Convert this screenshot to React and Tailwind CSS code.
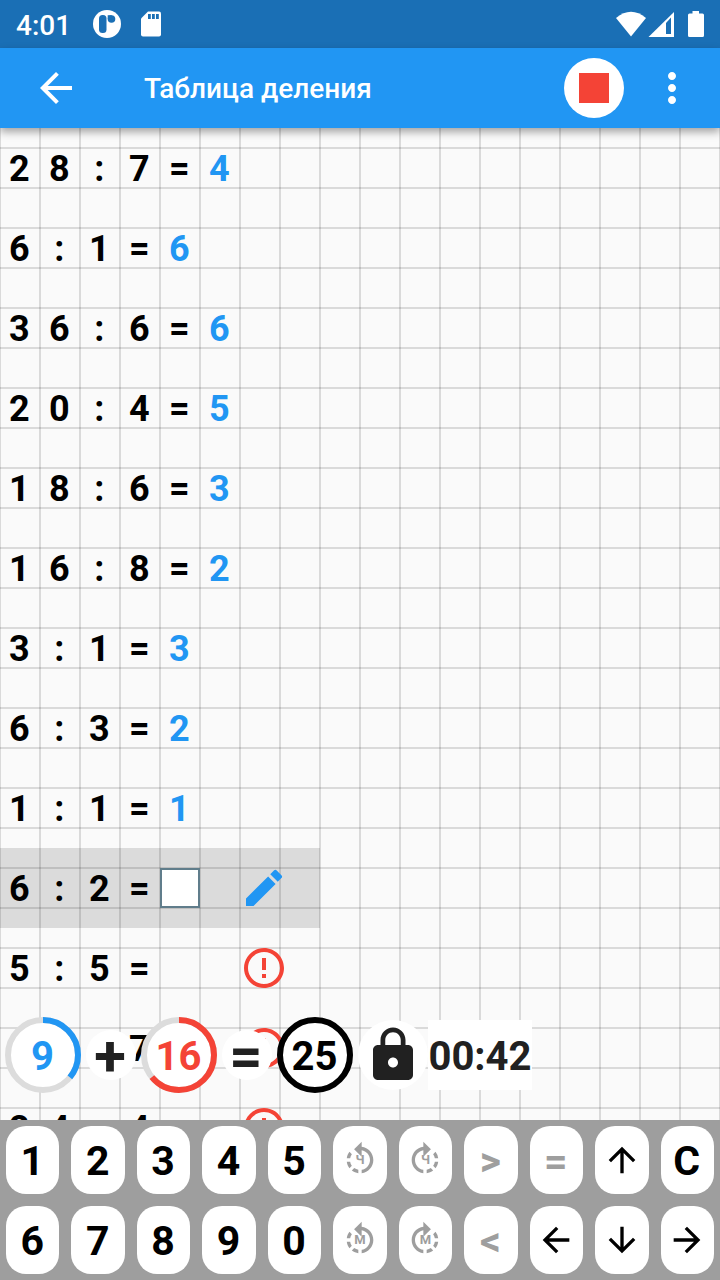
import { MdArrowBack, MdArrowForward, MdArrowUpward, MdArrowDownward, MdMoreVert, MdEdit, MdErrorOutline, MdLock, MdRotateLeft, MdRotateRight } from "react-icons/md";

const tasks = [
  ["28:7=", "4"],
  ["6:1=", "6"],
  ["36:6=", "6"],
  ["20:4=", "5"],
  ["18:6=", "3"],
  ["16:8=", "2"],
  ["3:1=", "3"],
  ["6:3=", "2"],
  ["1:1=", "1"],
  ["6:2=", "", "current"],
  ["5:5=", "", "open"],
  ["   7 ", "", "open"],
  ["24:4=", "", "open"],
];

function Cell({ children, blue }) {
  return (
    <span className={`flex w-10 shrink-0 justify-center pt-[2px] pr-[1.5px] ${blue ? "text-[#2196f3]" : "text-black"}`}>
      {children}
    </span>
  );
}

function Row({ task, answer, state }) {
  return (
    <div className={`flex h-20 w-80 shrink-0 items-center ${state === "current" ? "bg-black/12" : ""}`}>
      <div className="flex w-[240px] items-center text-[36px] leading-[40px] font-bold">
        {task.split("").map((c, i) => (
          <Cell key={i}>{c}</Cell>
        ))}
        {answer && <Cell blue>{answer}</Cell>}
        {state === "current" && <span className="size-10 border-2 border-[#607d8b] bg-white" />}
      </div>
      {state === "current" && <MdEdit className="size-12 text-[#2196f3]" />}
      {state === "open" && <MdErrorOutline className="size-12 text-[#f44336]" />}
    </div>
  );
}

function Ring({ value, part, color }) {
  const c = 2 * Math.PI * 35;
  return (
    <div className="grid size-[76px] shrink-0 place-items-center rounded-full">
      <svg className="col-start-1 row-start-1 size-[76px]" viewBox="0 0 76 76" fill="none">
        <circle cx="38" cy="38" r="35" fill="#fff" stroke="#dcdcdc" strokeWidth="6" />
        <circle cx="38" cy="38" r="35" stroke={color} strokeWidth="6" strokeDasharray={`${c * part} ${c}`} transform="rotate(-90 38 38)" />
      </svg>
      <span className="col-start-1 row-start-1 pt-[4px] pr-[1px] text-[40px] leading-none font-bold" style={{ color }}>
        {value}
      </span>
    </div>
  );
}

function Sign({ children }) {
  return (
    <div className="flex size-[50px] shrink-0 items-center justify-center rounded-full bg-white pt-[2px] pr-[2px] text-[58px] leading-none font-bold text-[#212121]">
      {children}
    </div>
  );
}

function Label({ children, muted }) {
  return <span className={`pt-[2px] pr-[1px] ${muted ? "text-[#9e9e9e]" : "text-black"}`}>{children}</span>;
}

function Turn({ icon: Icon, letter }) {
  return (
    <span className="grid place-items-center text-[#9e9e9e]">
      <Icon className="col-start-1 row-start-1 size-10" />
      <span className="col-start-1 row-start-1 pb-[1px] text-[13px] leading-none font-bold">{letter}</span>
    </span>
  );
}

const digit = (d) => <Label>{d}</Label>;
const arrow = "size-10 text-black";
const keys = [
  ...["1", "2", "3", "4", "5"].map(digit),
  <Turn icon={MdRotateLeft} letter="Ч" />,
  <Turn icon={MdRotateRight} letter="Ч" />,
  <Label muted>&gt;</Label>,
  <Label muted>=</Label>,
  <MdArrowUpward className={arrow} />,
  ...["C", "6", "7", "8", "9", "0"].map(digit),
  <Turn icon={MdRotateLeft} letter="М" />,
  <Turn icon={MdRotateRight} letter="М" />,
  <Label muted>&lt;</Label>,
  <MdArrowBack className={arrow} />,
  <MdArrowDownward className={arrow} />,
  <MdArrowForward className={arrow} />,
];

export default function App() {
  return (
    <div className="flex h-[1280px] w-[720px] flex-col overflow-hidden bg-[#fafafa] font-[Roboto,sans-serif]">
      <div className="relative z-10 flex h-12 shrink-0 items-center bg-[#1a6fb5] px-4 text-white">
        <span className="w-[77px] pt-[3px] text-[28px] leading-none font-medium">4:01</span>
        <svg className="size-7" viewBox="0 0 28 28">
          <circle cx="14" cy="14" r="14" fill="#fff" />
          <rect x="6" y="5" width="7.500" height="18" rx="3.500" fill="#1a6fb5" />
          <circle cx="18.500" cy="9" r="3.800" fill="#1a6fb5" />
          <path d="M14.700 5.200h4v4h-4z" fill="#1a6fb5" />
        </svg>
        <svg className="ml-5 h-[26px] w-5" viewBox="0 0 20 26">
          <path d="M7 0.500h11a2 2 0 0 1 2 2v21a2 2 0 0 1-2 2H2a2 2 0 0 1-2-2V7.500z" fill="#fff" />
          <path d="M7 3h2.800v5H7zM11 3h2.800v5h-2.800zM15 3h2.800v5h-2.800z" fill="#1a6fb5" />
        </svg>
        <svg className="ml-auto h-[26px] w-[88px]" viewBox="616 11 88 26">
          <path d="M616 18Q631 5.500 646 18L631 36.500z" fill="#fff" />
          <path d="M674 12v25h-25.500z" fill="#fff" />
          <path d="M666 23l5-5.500v16.500h-5z" fill="#1a6fb5" />
          <path d="M692.500 11h6.500v2.500h3.500a1.500 1.500 0 0 1 1.500 1.500v20.500a1.500 1.500 0 0 1-1.500 1.500h-13a1.500 1.500 0 0 1-1.500-1.500v-20.500a1.500 1.500 0 0 1 1.500-1.500h3z" fill="#fff" />
        </svg>
      </div>
      <header className="relative z-10 flex h-20 shrink-0 items-center bg-[#2196f3] pr-6 pl-8 text-white shadow-[0_4px_8px_rgba(0,0,0,0.35)]">
        <MdArrowBack className="size-12" />
        <h1 className="ml-16 pt-[2px] text-[28px] leading-none font-medium">Таблица деления</h1>
        <div className="ml-auto flex size-[60px] items-center justify-center rounded-full bg-white">
          <div className="size-[30px] bg-[#f44336]" />
        </div>
        <MdMoreVert className="ml-6 size-12" />
      </header>
      <main className="relative h-[992px] shrink-0 overflow-hidden bg-[linear-gradient(to_right,rgba(0,0,0,0.13)_1px,transparent_1px,transparent_39px,rgba(0,0,0,0.13)_39px),linear-gradient(to_bottom,rgba(0,0,0,0.13)_1px,transparent_1px,transparent_39px,rgba(0,0,0,0.13)_39px)] bg-[size:40px_40px] bg-[position:0_20px]">
        <div className="flex flex-col">
          {tasks.map(([task, answer, state], i) => (
            <Row key={i} task={task} answer={answer} state={state} />
          ))}
        </div>
        <div className="absolute bottom-[27px] left-[5px] flex items-center">
          <Ring value="9" part={0.36} color="#2196f3" />
          <div className="ml-[5px]"><Sign>+</Sign></div>
          <div className="ml-[5px]"><Ring value="16" part={0.64} color="#f44336" /></div>
          <div className="ml-[5px]"><Sign>=</Sign></div>
          <div className="ml-[5px]"><Ring value="25" part={1} color="#000000" /></div>
          <div className="ml-[5px] flex size-[70px] items-center justify-center rounded-full bg-white">
            <MdLock className="size-[60px] text-[#212121]" />
          </div>
          <div className="flex h-[70px] w-[104px] items-center justify-center bg-white pt-[3px] text-[40px] font-bold text-[#212121]">
            00:42
          </div>
        </div>
      </main>
      <div className="relative grid h-40 shrink-0 grid-cols-11 grid-rows-2 bg-[#9e9e9e]">
        {keys.map((k, i) => (
          <div key={i} className="p-[6px]">
            <button className="flex h-[68px] w-full items-center justify-center rounded-[20px] bg-white text-[41px] leading-none font-bold text-black">
              {k}
            </button>
          </div>
        ))}
      </div>
    </div>
  );
}
